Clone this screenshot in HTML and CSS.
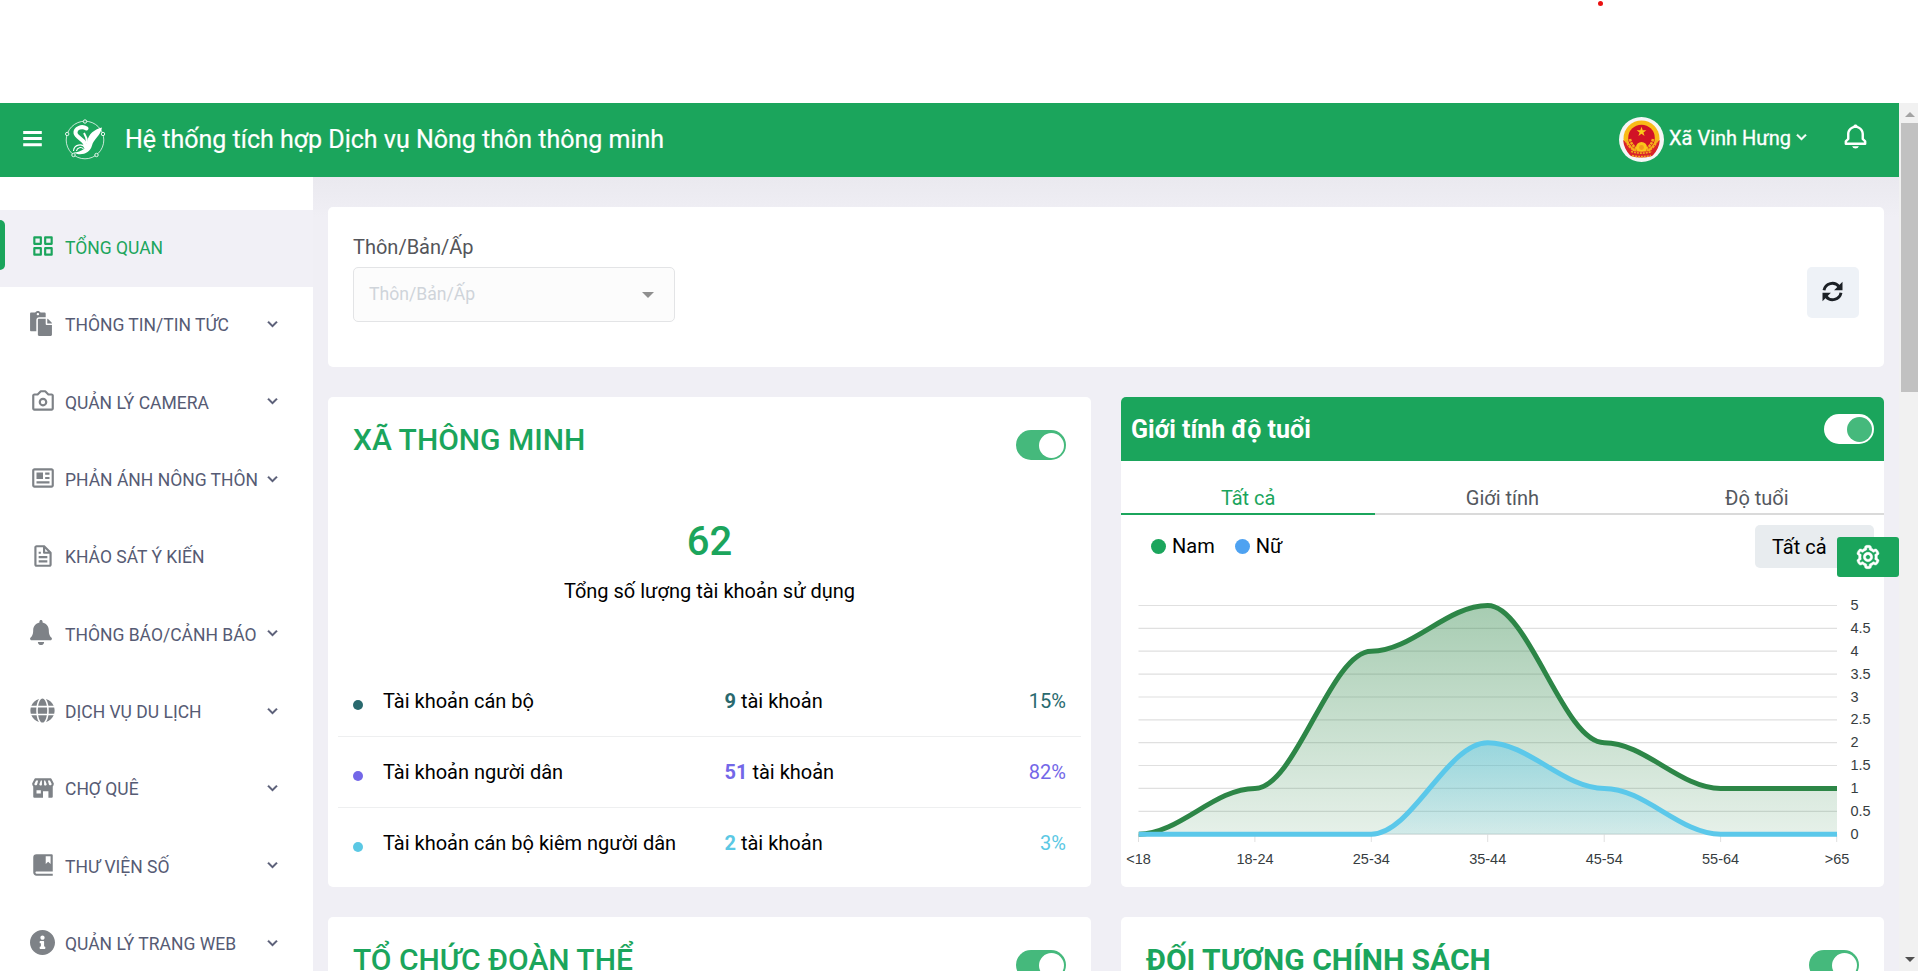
FILE: index.html
```html
<!DOCTYPE html>
<html lang="vi">
<head>
<meta charset="utf-8">
<title>Hệ thống tích hợp Dịch vụ Nông thôn thông minh</title>
<link rel="stylesheet" href="styles.css">
</head>
<body>
<svg class="defs" width="0" height="0">
  <symbol id="chev" viewBox="0 0 24 24"><path d="M16.293 9.293 12 13.586 7.707 9.293l-1.414 1.414L12 16.414l5.707-5.707z"/></symbol>
</svg>
<div class="top-space"><span class="red-dot"></span></div>
<div class="frame">
  <div class="app">
    <header class="header">
      <svg class="burger" width="20" height="18" viewBox="0 0 20 18"><path d="M.2 1h18.600v3H.2zM.2 7h18.600v3H.2zM.2 13.200h18.600v3H.2z" fill="#fff"/></svg>
      <svg class="logo" width="42" height="42" viewBox="0 0 42 42" fill="none" stroke="#fff">
        <circle cx="21" cy="21" r="18.8" stroke-width="1" opacity=".75"/>
        <g fill="#1ba55c" stroke-width="1" opacity=".9"><circle cx="21" cy="2.5" r="1.7"/><circle cx="3.2" cy="15" r="1.7"/><circle cx="39" cy="15" r="1.7"/><circle cx="9.5" cy="36" r="1.7"/><circle cx="32.5" cy="36" r="1.7"/></g>
        <path d="M22.5 9.500C18 6.500 11 9 11.500 14c.5 5 11 7 10 13.500" stroke-width="4" stroke-linecap="round"/>
        <path d="M38 8.500C31 10.500 24 14 23 24c-.5 5-5 9-13.500 9.500 7 4 16.500 1 18.500-7C29.500 20 36.500 17 38 8.500z" fill="#fff" stroke="none"/>
        <path d="M20 14c2 3 3 6 3 10" stroke-width="2"/>
        <path d="M9.500 32a6.500 6.500 0 0 1 12-3M12.500 32a4 4 0 0 1 7-2" stroke-width="1.100"/>
      </svg>
      <h1 class="brand">Hệ thống tích hợp Dịch vụ Nông thôn thông minh</h1>
      <svg class="avatar" width="45" height="45" viewBox="0 0 45 45">
        <circle cx="22.500" cy="22.500" r="22.500" fill="#f5f6f6"/>
        <circle cx="22.500" cy="21.500" r="18" fill="#f9bb18"/>
        <path d="M4.200 23l6 5 6 10-5 .5C7 34 4.500 29 4.200 23zM40.800 23l-6 5-6 10 5 .5c4.200-4.500 6.700-9.500 7-15.500z" fill="#d9232a"/>
        <circle cx="22.500" cy="21" r="13.300" fill="#d11226"/>
        <path d="M22.500 9.800l1.200 3.500h3.700l-3 2.200 1.200 3.500-3.100-2.200-3.100 2.200 1.200-3.500-3-2.200h3.700z" fill="#fbc91b"/>
        <path d="M7 23c2 6 6 9 10 11M38 23c-2 6-6 9-10 11M11 22c1 5 4 8 7 10M34 22c-1 5-4 8-7 10" stroke="#f6ad1b" stroke-width="2.600" stroke-dasharray="2.500 .7" fill="none"/>
        <circle cx="22.500" cy="30.500" r="5.500" fill="#fbc51b"/><circle cx="22.500" cy="30.500" r="2.400" fill="#f39a1e"/>
        <path d="M9 32.500c9 3 18 3 27 0l-3 6.500c-7 2-14 2-21 0z" fill="#d9232a"/>
        <path d="M12 34.500c8 2.200 13 2.200 21 0M13 38.500c7 1.500 12 1.500 19 0" stroke="#f3a51e" stroke-width="1.600" stroke-dasharray="2 1" fill="none"/>
      </svg>
      <span class="user">Xã Vinh Hưng</span>
      <svg class="user-chev" width="21" height="21"><use href="#chev"/></svg>
      <svg class="bell" width="29" height="29" viewBox="0 0 24 24" fill="#fff"><path d="M19 13.586V10c0-3.217-2.185-5.927-5.145-6.742C13.562 2.520 12.846 2 12 2s-1.562.520-1.855 1.258C7.185 4.074 5 6.783 5 10v3.586l-1.707 1.707A.996.996 0 0 0 3 16v2a1 1 0 0 0 1 1h16a1 1 0 0 0 1-1v-2a.996.996 0 0 0-.293-.707L19 13.586zM19 17H5v-.586l1.707-1.707A.996.996 0 0 0 7 14v-4c0-2.757 2.243-5 5-5s5 2.243 5 5v4c0 .266.105.520.293.707L19 16.414V17zm-7 5a2.980 2.980 0 0 0 2.818-2H9.182A2.980 2.980 0 0 0 12 22z"/></svg>
    </header>
    <div class="body">
      <nav class="sidebar">
        <a class="item active"><span class="ico"><svg width="26" height="26" viewBox="0 0 24 24"><path d="M10 3H4a1 1 0 0 0-1 1v6a1 1 0 0 0 1 1h6a1 1 0 0 0 1-1V4a1 1 0 0 0-1-1zM9 9H5V5h4zM20 3h-6a1 1 0 0 0-1 1v6a1 1 0 0 0 1 1h6a1 1 0 0 0 1-1V4a1 1 0 0 0-1-1zm-1 6h-4V5h4zM10 13H4a1 1 0 0 0-1 1v6a1 1 0 0 0 1 1h6a1 1 0 0 0 1-1v-6a1 1 0 0 0-1-1zm-1 6H5v-4h4zM20 13h-6a1 1 0 0 0-1 1v6a1 1 0 0 0 1 1h6a1 1 0 0 0 1-1v-6a1 1 0 0 0-1-1zm-1 6h-4v-4h4z" fill-rule="evenodd"/></svg></span><span class="lbl">TỔNG QUAN</span></a>
        <a class="item"><span class="ico fa"><svg width="22" height="25" viewBox="0 0 448 512"><path d="M128 184c0-30.879 25.122-56 56-56h136V56c0-13.255-10.745-24-24-24h-80.610C204.306 12.890 183.637 0 160 0s-44.306 12.890-55.390 32H24C10.745 32 0 42.745 0 56v336c0 13.255 10.745 24 24 24h104V184zm32-144c13.255 0 24 10.745 24 24s-10.745 24-24 24-24-10.745-24-24 10.745-24 24-24zm184 248h104v200c0 13.255-10.745 24-24 24H184c-13.255 0-24-10.745-24-24V184c0-13.255 10.745-24 24-24h136v104c0 13.200 10.800 24 24 24zm104-38.059V256h-96v-96h6.059a24 24 0 0 1 16.970 7.029l65.941 65.941a24.002 24.002 0 0 1 7.030 16.971z"/></svg></span><span class="lbl">THÔNG TIN/TIN TỨC</span><svg class="chev"><use href="#chev"/></svg></a>
        <a class="item"><span class="ico"><svg width="26" height="26" viewBox="0 0 24 24"><path d="M12 9c-2.210 0-4 1.790-4 4s1.790 4 4 4 4-1.790 4-4-1.790-4-4-4zm0 6a2 2 0 1 1 0-4 2 2 0 0 1 0 4z"/><path d="M20 5h-2.586l-2.707-2.707A.996.996 0 0 0 14 2h-4a.996.996 0 0 0-.707.293L6.586 5H4c-1.103 0-2 .897-2 2v12c0 1.103.897 2 2 2h16c1.103 0 2-.897 2-2V7c0-1.103-.897-2-2-2zM4 19V7h3c.266 0 .520-.105.707-.293L10.414 4h3.172l2.707 2.707A.996.996 0 0 0 17 7h3v12H4z"/></svg></span><span class="lbl">QUẢN LÝ CAMERA</span><svg class="chev"><use href="#chev"/></svg></a>
        <a class="item"><span class="ico"><svg width="26" height="26" viewBox="0 0 24 24"><path d="M19.875 3H4.125C2.953 3 2 3.897 2 5v14c0 1.103.953 2 2.125 2h15.750C21.047 21 22 20.103 22 19V5c0-1.103-.953-2-2.125-2zm0 16H4.125c-.057 0-.096-.016-.113-.016L3.988 5.046c.007-.01.052-.046.137-.046h15.750c.079.001.122.028.125.014v13.940c-.007.010-.052.046-.125.046z"/><path d="M6 7h6v6H6zm7 8H6v2h12v-2h-4zm1-4h4v2h-4zm0-4h4v2h-4z"/></svg></span><span class="lbl">PHẢN ÁNH NÔNG THÔN</span><svg class="chev"><use href="#chev"/></svg></a>
        <a class="item"><span class="ico"><svg width="26" height="26" viewBox="0 0 24 24"><path d="M19.903 8.586a.997.997 0 0 0-.196-.293l-6-6a.997.997 0 0 0-.293-.196A.991.991 0 0 0 13 2H6c-1.103 0-2 .897-2 2v16c0 1.103.897 2 2 2h12c1.103 0 2-.897 2-2V9a.960.960 0 0 0-.097-.414zM16.586 8H14V5.414L16.586 8zM6 20V4h6v5a1 1 0 0 0 1 1h5l.002 10H6z"/><path d="M8 16h8v2H8zm0-4h8v2H8zm0-4h2v2H8z"/></svg></span><span class="lbl">KHẢO SÁT Ý KIẾN</span></a>
        <a class="item"><span class="ico fa"><svg width="22" height="25" viewBox="0 0 448 512"><path d="M224 512c35.320 0 63.970-28.650 63.970-64H160.030c0 35.350 28.650 64 63.970 64zm215.390-149.710c-19.320-20.760-55.470-51.990-55.470-154.290 0-77.700-54.480-139.900-127.940-155.160V32c0-17.670-14.320-32-31.980-32s-31.980 14.330-31.980 32v20.840C118.560 68.100 64.080 130.300 64.080 208c0 102.300-36.150 133.530-55.470 154.290-6 6.450-8.660 14.160-8.610 21.710.110 16.400 12.980 32 32.100 32h383.800c19.120 0 32-15.600 32.100-32 .050-7.550-2.610-15.270-8.610-21.710z"/></svg></span><span class="lbl">THÔNG BÁO/CẢNH BÁO</span><svg class="chev"><use href="#chev"/></svg></a>
        <a class="item"><span class="ico fa"><svg width="25" height="25" viewBox="0 0 496 512"><path d="M336.500 160C322 70.700 287.800 8 248 8s-74 62.700-88.500 152h177zM152 256c0 22.200 1.200 43.500 3.300 64h185.300c2.100-20.500 3.300-41.800 3.300-64s-1.200-43.500-3.300-64H155.300c-2.100 20.500-3.300 41.800-3.300 64zm324.700-96c-28.600-67.900-86.500-120.400-158-141.600 24.400 33.800 41.200 84.700 50 141.600h108zM177.200 18.400C105.800 39.600 47.800 92.100 19.300 160h108c8.700-56.900 25.500-107.800 49.900-141.600zM487.400 192H372.700c2.100 21 3.300 42.500 3.300 64s-1.200 43-3.300 64h114.600c5.500-20.500 8.600-41.800 8.600-64s-3.100-43.500-8.500-64zM120 256c0-21.500 1.200-43 3.300-64H8.600C3.200 212.500 0 233.800 0 256s3.200 43.500 8.600 64h114.600c-2-21-3.200-42.500-3.200-64zm39.500 96c14.500 89.300 48.700 152 88.500 152s74-62.700 88.500-152h-177zm159.300 141.600c71.400-21.200 129.400-73.700 158-141.600h-108c-8.800 56.900-25.600 107.800-50 141.600zM19.300 352c28.600 67.900 86.500 120.400 158 141.600-24.400-33.800-41.200-84.700-50-141.600h-108z"/></svg></span><span class="lbl">DỊCH VỤ DU LỊCH</span><svg class="chev"><use href="#chev"/></svg></a>
        <a class="item"><span class="ico"><svg width="26" height="26" viewBox="0 0 24 24"><path fill-rule="evenodd" d="M22 8a1 1 0 0 0-.1-.4l-2-4A1 1 0 0 0 19 3H5a1 1 0 0 0-.9.600l-2 4A1 1 0 0 0 2 8a4 4 0 0 0 1 2.600V20a1 1 0 0 0 1 1h8v-6h5v6h3a1 1 0 0 0 1-1v-9.400A4 4 0 0 0 22 8zM5.600 5h1.900l-.9 3.500c-.2 1.200-2.500 1.200-2.600-.3zM10 5h1v4c-.5 1.200-2.400 1-2.400-.5zm3 0h1l1.400 3.500c0 1.500-1.900 1.700-2.400.5zm3.500 0h1.900L20 8.200c-.1 1.500-2.400 1.500-2.600.3zM6 14h4v3H6z"/></svg></span><span class="lbl">CHỢ QUÊ</span><svg class="chev"><use href="#chev"/></svg></a>
        <a class="item"><span class="ico"><svg width="26" height="26" viewBox="0 0 24 24"><path fill-rule="evenodd" d="M6 2a3 3 0 0 0-3 3v14c0 1.700 1.400 3 3 3h15v-2H6c-.6 0-1-.4-1-1s.4-1 1-1h15V3a1 1 0 0 0-1-1zM14.500 4H19v7l-2.250-2L14.500 11z"/></svg></span><span class="lbl">THƯ VIỆN SỐ</span><svg class="chev"><use href="#chev"/></svg></a>
        <a class="item"><span class="ico fa"><svg width="25" height="25" viewBox="8 8 496 496"><path d="M256 8C119.043 8 8 119.083 8 256c0 136.997 111.043 248 248 248s248-111.003 248-248C504 119.083 392.957 8 256 8zm0 110c23.196 0 42 18.804 42 42s-18.804 42-42 42-42-18.804-42-42 18.804-42 42-42zm56 254c0 6.627-5.373 12-12 12h-88c-6.627 0-12-5.373-12-12v-24c0-6.627 5.373-12 12-12h12v-64h-12c-6.627 0-12-5.373-12-12v-24c0-6.627 5.373-12 12-12h64c6.627 0 12 5.373 12 12v100h12c6.627 0 12 5.373 12 12v24z"/></svg></span><span class="lbl">QUẢN LÝ TRANG WEB</span><svg class="chev"><use href="#chev"/></svg></a>
      </nav>
      <main class="main">
        <section class="card filter">
          <div class="field">
            <label class="field-label">Thôn/Bản/Ấp</label>
            <div class="select"><span>Thôn/Bản/Ấp</span><i class="caret"></i></div>
          </div>
          <button class="refresh"><svg width="21" height="21" viewBox="0 0 21 21" fill="none" stroke="#1c2126" stroke-width="2.900"><path d="M2 9.200A8.500 8.500 0 0 1 17 5.500M19 11.800A8.500 8.500 0 0 1 4 15.500"/><path d="M20.500 .8v8.400h-8.400zM.5 20.200v-8.400h8.400z" fill="#1c2126" stroke="none"/></svg></button>
        </section>
        <div class="grid">
          <section class="card smart">
            <div class="card-head"><h2 class="title">XÃ THÔNG MINH</h2><span class="toggle"></span></div>
            <div class="total">62</div>
            <div class="total-label">Tổng số lượng tài khoản sử dụng</div>
            <div class="rows">
              <div class="row teal"><i class="dot"></i><span class="name">Tài khoản cán bộ</span><span class="count"><b>9</b> tài khoản</span><span class="pct">15%</span></div>
              <div class="row violet"><i class="dot"></i><span class="name">Tài khoản người dân</span><span class="count"><b>51</b> tài khoản</span><span class="pct">82%</span></div>
              <div class="row sky"><i class="dot"></i><span class="name">Tài khoản cán bộ kiêm người dân</span><span class="count"><b>2</b> tài khoản</span><span class="pct">3%</span></div>
            </div>
          </section>
          <section class="card gender">
            <div class="green-head"><h3 class="green-title">Giới tính độ tuổi</h3><span class="toggle invert"></span></div>
            <div class="tabs"><span class="tab on">Tất cả</span><span class="tab">Giới tính</span><span class="tab">Độ tuổi</span></div>
            <div class="legend"><i class="ldot g"></i><span class="lname">Nam</span><i class="ldot b"></i><span class="lname">Nữ</span><span class="pick">Tất cả</span></div>
            <svg class="chart" width="763" height="319" viewBox="1121 568 763 319">
              <defs>
                <linearGradient id="ga" x1="0" y1="0" x2="0" y2="1"><stop offset="0" stop-color="#2d8647" stop-opacity=".42"/><stop offset="1" stop-color="#2d8647" stop-opacity=".12"/></linearGradient>
                <linearGradient id="gb" x1="0" y1="0" x2="0" y2="1"><stop offset="0" stop-color="#5bc8ea" stop-opacity=".46"/><stop offset="1" stop-color="#5bc8ea" stop-opacity=".14"/></linearGradient>
                <clipPath id="plot"><rect x="1138.500" y="595" width="698.500" height="250"/></clipPath>
              </defs>
              <path d="M1138.500 605.500H1837M1138.500 628.400H1837M1138.500 651.200H1837M1138.500 674.100H1837M1138.500 697H1837M1138.500 719.800H1837M1138.500 742.700H1837M1138.500 765.500H1837M1138.500 788.400H1837M1138.500 811.300H1837M1138.500 834.200H1837" stroke="#e0e0e0" stroke-width="1.200"/>
              <path d="M1138.500 834v8M1254.900 834v8M1371.300 834v8M1487.700 834v8M1604.200 834v8M1720.600 834v8M1836.700 834v8" stroke="#e0e0e0"/>
              <g clip-path="url(#plot)" fill="none" stroke-width="5">
                <path fill="url(#ga)" stroke="none" d="M1138.500 834.200C1179.200 834.200 1214.200 788.400 1254.900 788.400C1295.600 788.400 1330.600 651.200 1371.300 651.200C1412 651.200 1447 605.500 1487.700 605.500C1528.400 605.500 1563.500 742.700 1604.200 742.700C1644.900 742.700 1679.900 788.400 1720.600 788.400H1837V834.200z"/>
                <path stroke="#2d8647" d="M1138.500 834.200C1179.200 834.200 1214.200 788.400 1254.900 788.400C1295.600 788.400 1330.600 651.200 1371.300 651.200C1412 651.200 1447 605.500 1487.700 605.500C1528.400 605.500 1563.500 742.700 1604.200 742.700C1644.900 742.700 1679.900 788.400 1720.600 788.400H1837"/>
                <path fill="url(#gb)" stroke="none" d="M1371.300 834.200C1412 834.200 1447 742.700 1487.700 742.700C1528.400 742.700 1563.500 788.400 1604.200 788.400C1644.900 788.400 1679.900 834.200 1720.600 834.200z"/>
                <path stroke="#5bc8ea" d="M1138.500 834.200H1371.300C1412 834.200 1447 742.700 1487.700 742.700C1528.400 742.700 1563.500 788.400 1604.200 788.400C1644.900 788.400 1679.900 834.200 1720.600 834.200H1837"/>
              </g>
              <g class="axis">
                <text x="1850.500" y="610">5</text><text x="1850.500" y="633">4.5</text><text x="1850.500" y="656">4</text><text x="1850.500" y="679">3.5</text><text x="1850.500" y="702">3</text><text x="1850.500" y="724">2.5</text><text x="1850.500" y="747">2</text><text x="1850.500" y="770">1.5</text><text x="1850.500" y="793">1</text><text x="1850.500" y="816">0.5</text><text x="1850.500" y="839">0</text>
              </g>
              <g class="axis mid">
                <text x="1138.500" y="864">&lt;18</text><text x="1255" y="864">18-24</text><text x="1371.300" y="864">25-34</text><text x="1487.700" y="864">35-44</text><text x="1604.200" y="864">45-54</text><text x="1720.600" y="864">55-64</text><text x="1837" y="864">&gt;65</text>
              </g>
            </svg>
          </section>
          <section class="card"><div class="card-head"><h2 class="title">TỔ CHỨC ĐOÀN THỂ</h2><span class="toggle"></span></div></section>
          <section class="card"><div class="card-head"><h2 class="title strong">ĐỐI TƯỢNG CHÍNH SÁCH</h2><span class="toggle"></span></div></section>
        </div>
      </main>
    </div>
    <div class="settings"><svg width="28" height="28" viewBox="0 0 24 24" fill="#fff" stroke="#fff" stroke-width=".4"><path d="M12 16c2.206 0 4-1.794 4-4s-1.794-4-4-4-4 1.794-4 4 1.794 4 4 4zm0-6c1.084 0 2 .916 2 2s-.916 2-2 2-2-.916-2-2 .916-2 2-2z"/><path d="m2.845 16.136 1 1.730c.531.917 1.809 1.261 2.730.730l.529-.306A8.100 8.100 0 0 0 9 19.402V20c0 1.103.897 2 2 2h2c1.103 0 2-.897 2-2v-.598a8.132 8.132 0 0 0 1.896-1.111l.529.306c.923.530 2.198.188 2.731-.731l.999-1.729a2.001 2.001 0 0 0-.731-2.732l-.505-.292a7.718 7.718 0 0 0 0-2.224l.505-.292a2.002 2.002 0 0 0 .731-2.732l-.999-1.729c-.531-.920-1.808-1.265-2.731-.732l-.529.306A8.100 8.100 0 0 0 15 4.598V4c0-1.103-.897-2-2-2h-2c-1.103 0-2 .897-2 2v.598a8.132 8.132 0 0 0-1.896 1.111l-.529-.306c-.924-.531-2.200-.187-2.731.732l-.999 1.729a2.001 2.001 0 0 0 .731 2.732l.505.292a7.683 7.683 0 0 0 0 2.223l-.505.292a2.003 2.003 0 0 0-.731 2.733zm3.326-2.758A5.703 5.703 0 0 1 6 12c0-.462.058-.926.170-1.378a.999.999 0 0 0-.470-1.108l-1.123-.650.998-1.729 1.145.662a.997.997 0 0 0 1.188-.142 6.071 6.071 0 0 1 2.384-1.399A1 1 0 0 0 11 5.300V4h2v1.300a1 1 0 0 0 .708.956 6.083 6.083 0 0 1 2.384 1.399.999.999 0 0 0 1.188.142l1.144-.661 1 1.729-1.124.649a1 1 0 0 0-.470 1.108c.112.452.170.916.170 1.378 0 .461-.058.925-.171 1.378a1 1 0 0 0 .471 1.108l1.123.649-.998 1.729-1.145-.661a.996.996 0 0 0-1.188.142 6.071 6.071 0 0 1-2.384 1.399A1 1 0 0 0 13 18.700l.002 1.300H11v-1.300a1 1 0 0 0-.708-.956 6.083 6.083 0 0 1-2.384-1.399.992.992 0 0 0-1.188-.141l-1.144.662-1-1.729 1.124-.651a1 1 0 0 0 .471-1.108z"/></svg></div>
  </div>
  <div class="scrollbar"><i class="up"></i><div class="thumb"></div><i class="down"></i></div>
</div>
</body>
</html>
```

FILE: styles.css
```css
* { box-sizing: border-box; }
html, body { height: 100%; overflow: hidden; }
body { margin: 0; background: #fff; font-family: Roboto, "Liberation Sans", sans-serif; color: #000; font-size: 20px; display: flex; flex-direction: column; }
h1, h2, h3 { margin: 0; }
.defs { position: absolute; }
.top-space { height: 103px; flex: none; padding: 1px 0 0 1598px; }
.red-dot { display: block; width: 5px; height: 5px; border-radius: 50%; background: #ea1010; }
.frame { display: flex; height: 868px; }
.app { width: 1899px; flex: none; position: relative; background: #f0eff5; overflow: hidden; display: flex; flex-direction: column; }

.header { height: 74px; flex: none; background: #1ba55c; color: #fff; display: flex; align-items: center; padding: 0 29px 0 23px; }
.burger { margin-top: -2px; }
.logo { margin-left: 21px; }
.brand { margin-left: 19px; font-size: 25px; font-weight: 400; line-height: 30px; white-space: nowrap; -webkit-text-stroke: .2px #fff; }
.avatar { margin-left: auto; margin-top: -1px; }
.user { margin-left: 5px; margin-top: -4px; font-size: 20px; font-weight: 400; white-space: nowrap; -webkit-text-stroke: .3px #fff; }
.user-chev { margin: -7px 0 0 0; fill: #fff; stroke: #fff; stroke-width: .5; }
.bell { margin: -7px 0 0 29px; }

.body { display: flex; flex: 1; min-height: 0; }
.sidebar { width: 313px; flex: none; background: #fff; padding-top: 33px; overflow: hidden; }
.item { display: flex; align-items: center; height: 77.35px; padding: 0 30px 0 29px; color: #565b74; position: relative; fill: #7e8287; }
.item.active { background: #f1f0f6; color: #1ba55c; fill: #1ba55c; }
.item.active::before { content: ""; position: absolute; left: 0; top: 10px; width: 5px; height: 50px; background: #1ba55c; border-radius: 0 5px 5px 0; }
.ico { width: 36px; flex: none; display: flex; align-items: center; margin-top: -5px; padding-left: .6px; }
.ico.fa { padding-left: 1px; }
.lbl { font-size: 17.5px; line-height: 24px; white-space: nowrap; margin-top: -1.400px; }
.chev { width: 21px; height: 21px; margin: -5px 0 0 auto; flex: none; fill: #565b74; stroke: #565b74; stroke-width: .4; }

.main { flex: 1; padding: 30px 15px 0; display: flex; flex-direction: column; gap: 30px; background: linear-gradient(#eae9ef, #f0eff5 40px); }
.card { background: #fff; border-radius: 5px; }
.filter { height: 160px; flex: none; display: flex; justify-content: space-between; padding: 27px 25px 0; }
.field-label { display: block; height: 33px; line-height: 27px; color: #54555a; font-size: 20px; }
.select { width: 322px; height: 55px; border: 1px solid #e3e4e6; border-radius: 5px; background: #fcfcfc; display: flex; align-items: center; justify-content: space-between; padding: 0 20px 1px 15px; font-size: 17.600px; color: #cfd4da; }
.caret { border: 6px solid transparent; border-top-color: #8f8f8f; border-bottom: 0; margin-top: 2px; }
.refresh { width: 52px; height: 51px; margin-top: 33px; padding: 0 1px 2px 0; border: 0; border-radius: 5px; background: #eef2f7; display: grid; place-items: center; }

.grid { display: grid; grid-template-columns: 763px 763px; grid-template-rows: 490px 200px; gap: 30px; }
.card-head { display: flex; justify-content: space-between; padding: 24px 25px 0; }
.title { color: #1ba55c; font-size: 30px; font-weight: 500; line-height: 38px; height: 39px; white-space: nowrap; }
.title.strong { font-weight: 700; }
.toggle { width: 50px; height: 30px; border-radius: 15px; background: #45b97c; margin-top: 9px; padding: 2.500px; display: flex; justify-content: flex-end; }
.toggle::before { content: ""; width: 25px; height: 25px; border-radius: 50%; background: #fff; }
.toggle.invert { background: #fff; margin: 0; }
.toggle.invert::before { background: #45b97c; }

.smart { display: flex; flex-direction: column; padding-bottom: 8px; }
.total { margin-top: 58px; text-align: center; font-size: 40px; line-height: 48px; font-weight: 500; color: #1ba55c; }
.total-label { margin-top: 12px; text-align: center; font-size: 20px; line-height: 26px; }
.rows { margin-top: auto; padding: 0 10px; }
.row { height: 71px; display: grid; grid-template-columns: 30px 341.500px 1fr auto; align-items: center; padding: 0 15px; border-bottom: 1px solid #eeeff0; }
.row:last-child { border-bottom-color: transparent; }
.dot { width: 10px; height: 10px; border-radius: 50%; background: currentColor; margin-top: 8px; }
.name, .count { color: #000; }
.count b { font-weight: 700; }
.teal, .teal b { color: #29696e; }
.violet, .violet b { color: #7367e8; }
.sky, .sky b { color: #5bc8e4; }

.green-head { height: 64px; background: #1ba55c; border-radius: 5px 5px 0 0; display: flex; align-items: center; justify-content: space-between; padding: 0 10px; color: #fff; }
.green-title { font-size: 25px; font-weight: 700; }
.tabs { display: grid; grid-template-columns: repeat(3, 1fr); height: 54px; }
.tab { text-align: center; padding-top: 24px; line-height: 27px; color: #54585e; border-bottom: 2px solid #dadada; }
.tab.on { color: #1ba55c; border-color: #1ba55c; }
.legend { display: flex; align-items: center; height: 53px; padding: 10px 10px 0 30px; }
.ldot { width: 15px; height: 15px; border-radius: 50%; margin-right: 6px; }
.ldot.g { background: #1ba55c; }
.ldot.b { background: #4ea2f1; }
.lname { margin-right: 20px; margin-top: -1px; }
.pick { margin-left: auto; width: 119px; height: 43px; line-height: 45px; padding-left: 17px; background: #e8ecef; border-radius: 5px; }
.chart { display: block; }
.axis { font-family: "Liberation Sans", Arial, sans-serif; font-size: 14.500px; fill: #373d3f; }
.mid { text-anchor: middle; }

.settings { position: absolute; right: 0; top: 434px; width: 62px; height: 40px; background: #1ba55c; border-radius: 3px; display: grid; place-items: center; }
.scrollbar { flex: 1; background: #f1f1f1; display: flex; flex-direction: column; align-items: center; padding-left: 2px; position: relative; }
.up { height: 20px; flex: none; display: grid; place-items: center; }
.up::before { content: ""; border: 5px solid transparent; border-top: 0; border-bottom-color: #a3a3a3; margin-top: 2px; }
.thumb { width: 100%; height: 269px; background: #c1c1c1; flex: none; }
.down { margin-top: auto; margin-bottom: 9px; border: 5px solid transparent; border-top-color: #505050; border-bottom: 0; }
```
